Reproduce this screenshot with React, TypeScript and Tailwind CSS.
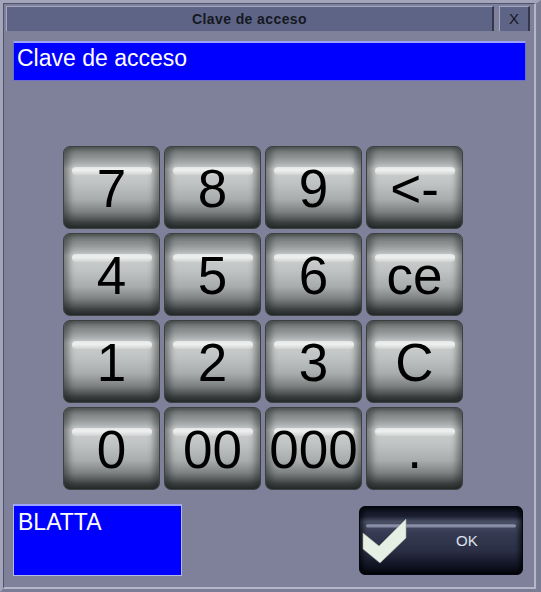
import React from 'react';

const keys: string[] = ['7', '8', '9', '<-', '4', '5', '6', 'ce', '1', '2', '3', 'C', '0', '00', '000', '.'];

const KeyButton: React.FC<{ label: string }> = ({ label }) => (
    <button
        type="button"
        className="relative flex h-[83px] w-[97px] items-center justify-center rounded-[7px] border border-[#3c4040] bg-[linear-gradient(to_bottom,#6f7373_0%,#8b8f8f_12%,#a9adad_20%,#cdcfcf_27%,#c0c3c3_45%,#a9acac_65%,#7d8181_80%,#3f4343_93%,#2c3030_100%)] pt-[2px] shadow-[inset_5px_0_6px_rgba(30,34,34,0.45),inset_-5px_0_6px_rgba(30,34,34,0.45)]"
    >
        <span className="pointer-events-none absolute left-[8px] right-[7px] top-[20px] h-[8px] rounded-full bg-[linear-gradient(to_bottom,rgba(255,255,255,0.55),rgba(240,242,242,0.95)_40%,rgba(220,222,222,0.4))]" />
        <span className="relative text-[53px] leading-none text-black [font-family:'Liberation_Sans',Arial,sans-serif]">
            {label}
        </span>
    </button>
);

const App: React.FC = () => {
    return (
        <div className="h-[592px] w-[541px] overflow-hidden border-l-[3px] border-t-[3px] border-r-[4px] border-b-[3px] border-l-[#a3a6ba] border-t-[#a3a6ba] border-r-[#7a7d96] border-b-[#7a7d96] bg-[#7e8199] [font-family:'Liberation_Sans',Arial,sans-serif]">
            <div className="flex h-[586px] w-[533px] flex-col border-l border-t border-r-2 border-b-2 border-l-[#4f536b] border-t-[#4f536b] border-r-[#b4b7c8] border-b-[#b4b7c8] bg-[#7e8199]">
                {/* title bar */}
                <div className="ml-[2px] mt-[2px] flex h-[25px] gap-[5px]">
                    <div className="flex w-[488px] items-center justify-center border-l border-t border-r-2 border-l-[#a4a8c0] border-t-[#a4a8c0] border-r-[#33384f] bg-[#5d6486]">
                        <span className="text-[14px] font-bold tracking-[0.4px] text-[#151822]">Clave de acceso</span>
                    </div>
                    <div className="flex w-[31px] items-center justify-center border-l border-t border-r-2 border-l-[#a4a8c0] border-t-[#a4a8c0] border-r-[#33384f] bg-[#5d6486]">
                        <span className="text-[15px] text-[#151822]">X</span>
                    </div>
                </div>

                {/* entry field */}
                <div className="ml-[9px] mt-[10px] flex h-[40px] w-[513px] items-start border border-t-2 border-[#6a6fd0] border-t-[#9ea2ff] bg-[#0000ff] px-[3px] pt-[1px]">
                    <span className="text-[23px] leading-[28px] text-white">Clave de acceso</span>
                </div>

                {/* keypad */}
                <div className="ml-[59px] mt-[65px] grid w-[400px] grid-cols-[repeat(4,97px)] gap-[4px]">
                    {keys.map(k => (
                        <KeyButton key={k} label={k} />
                    ))}
                </div>

                {/* footer */}
                <div className="mt-[14px] flex items-start">
                    <div className="ml-[9px] h-[72px] w-[169px] border border-t-2 border-[#b6b9e6] border-t-[#9ea2ff] bg-[#0000ff] px-[4px] pt-[3px]">
                        <span className="text-[23px] leading-[26px] text-white">BLATTA</span>
                    </div>
                    <button
                        type="button"
                        className="relative ml-[177px] mt-[2px] flex h-[69px] w-[164px] items-center overflow-hidden rounded-[6px] border border-[#05070f] bg-[linear-gradient(to_bottom,#0b0d18_0%,#1c2032_14%,#4a5066_22%,#353a52_40%,#2a2f45_65%,#131626_85%,#06070e_100%)] shadow-[inset_3px_0_4px_rgba(0,0,0,0.6),inset_-3px_0_4px_rgba(0,0,0,0.6)]"
                    >
                        <span className="pointer-events-none absolute left-[6px] right-[6px] top-[17px] h-[4px] rounded-full bg-[linear-gradient(to_bottom,rgba(200,205,225,0.3),rgba(170,176,200,0.8),rgba(120,126,150,0.3))]" />
                        <svg className="absolute left-0 top-0" width="60" height="69" viewBox="0 0 60 69">
                            <polygon points="3,26 19,39 46,12 46,31 20,56 3,42" fill="#e6efe4" stroke="#9aa89a" strokeWidth="0.6" />
                        </svg>
                        <span className="absolute left-[96px] top-[25px] text-[15px] leading-[18px] text-[#dfe2ee]">OK</span>
                    </button>
                </div>
            </div>
        </div>
    );
};

export default App;
